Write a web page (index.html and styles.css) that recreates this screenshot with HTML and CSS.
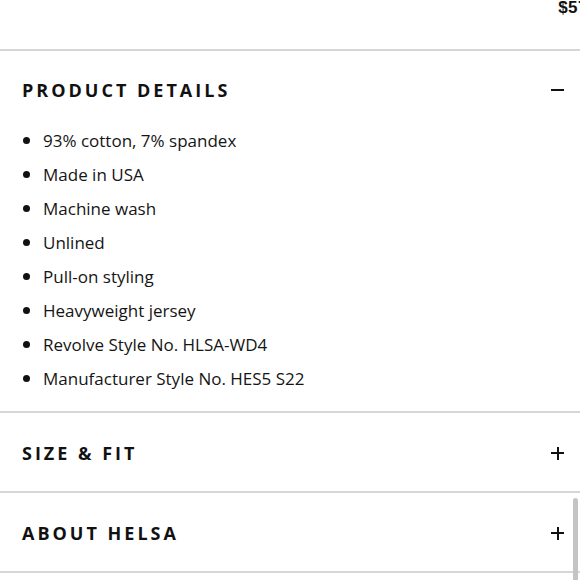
FILE: index.html
```html
<!DOCTYPE html>
<html>
<head>
<meta charset="utf-8">
<link rel="stylesheet" href="styles.css">
</head>
<body>
<div class="page">
  <div class="price-row"><span class="price">$57</span></div>
  <section class="acc open">
    <div class="acc-head">
      <h2 class="acc-title">PRODUCT DETAILS</h2>
      <span class="acc-icon minus"></span>
    </div>
    <ul class="details">
      <li>93% cotton, 7% spandex</li>
      <li>Made in USA</li>
      <li>Machine wash</li>
      <li>Unlined</li>
      <li>Pull-on styling</li>
      <li>Heavyweight jersey</li>
      <li>Revolve Style No. HLSA-WD4</li>
      <li>Manufacturer Style No. HES5 S22</li>
    </ul>
  </section>
  <section class="acc">
    <div class="acc-head">
      <h2 class="acc-title">SIZE &amp; FIT</h2>
      <span class="acc-icon plus"></span>
    </div>
  </section>
  <section class="acc last">
    <div class="acc-head">
      <h2 class="acc-title">ABOUT HELSA</h2>
      <span class="acc-icon plus"></span>
    </div>
  </section>
  <div class="scrollbar"></div>
</div>
</body>
</html>
```
FILE: styles.css
```css
* { box-sizing: border-box; }
html, body { margin: 0; padding: 0; background: #fff; }
body { width: 580px; height: 580px; overflow: hidden; font-family: "Open Sans", "DejaVu Sans", sans-serif; color: #111; }
.page { position: relative; width: 580px; height: 580px; }
.price-row { height: 49px; display: flex; justify-content: flex-end; overflow: hidden; }
.price { font-family: "Liberation Sans", Arial, sans-serif; font-weight: 700; font-size: 17px; line-height: 17px; margin-top: -1px; margin-right: -8px; letter-spacing: 0.5px; color: #111; white-space: nowrap; }
.acc { border-top: 2px solid #d6d6d6; }
.acc.last { border-bottom: 2px solid #d6d6d6; }
.acc-head { height: 78px; display: flex; align-items: center; justify-content: space-between; padding: 2px 16px 0 22px; }
.open .acc-head { height: 72px; padding-top: 5px; }
.acc-title { margin: 0; font-size: 18px; font-weight: 700; letter-spacing: 3px; color: #111; }
.acc-icon { position: relative; width: 13px; height: 13px; display: block; }
.acc-icon::before { content: ""; position: absolute; left: 0; top: 5.5px; width: 13px; height: 2px; background: #111; }
.plus::after { content: ""; position: absolute; top: 0; left: 5.5px; width: 2px; height: 13px; background: #111; }
.details { list-style: none; margin: 0; padding: 0 0 16px 22px; }
.details li { height: 34px; display: flex; align-items: center; font-size: 17px; color: #151515; }
.details li::before { content: ""; width: 7px; height: 7px; border-radius: 50%; background: #111; margin: 0 13px 0 1px; flex: none; }
.scrollbar { position: absolute; right: 2px; top: 498px; width: 5px; height: 90px; border-radius: 3px; background: #c4c4c4; }
```
